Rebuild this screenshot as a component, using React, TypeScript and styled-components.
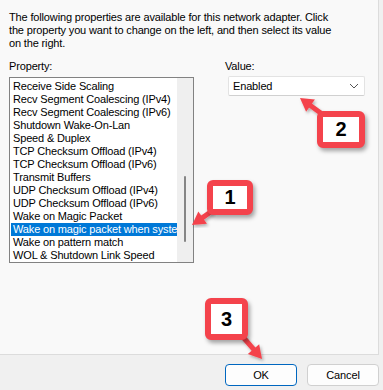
import React from "react";
import styled, { createGlobalStyle } from "styled-components";

const Global = createGlobalStyle`
  html, body { margin: 0; padding: 0; background: #f0f0f0; }
  body { font-family: "Liberation Sans", Arial, sans-serif; }
`;

const RED = "#f4434c";

const Window = styled.div`
  position: relative;
  width: 383px;
  height: 390px;
  background: #f0f0f0;
  overflow: hidden;
  font-family: "Liberation Sans", Arial, sans-serif;
  font-size: 11px;
  letter-spacing: -0.15px;
  color: #000;
`;

const Panel = styled.div`
  box-sizing: border-box;
  width: 379px;
  height: 355px;
  background: #f9f9f9;
  border-right: 1px solid #dcdcdc;
  border-bottom: 1px solid #dcdcdc;
  padding: 11px 0 0 9px;
`;

const Description = styled.p`
  margin: 0;
  width: 336px;
  line-height: 13px;
`;

const Columns = styled.div`
  display: flex;
  margin-top: 10px;
`;

const LeftCol = styled.div`
  display: flex;
  flex-direction: column;
  width: 185px;
`;

const RightCol = styled.div`
  display: flex;
  flex-direction: column;
  margin-left: 31px;
`;

const Label = styled.div`
  height: 17px;
  line-height: 13px;
`;

const ListBox = styled.div`
  display: flex;
  width: 185px;
  height: 186px;
  box-sizing: border-box;
  border: 1px solid #828282;
  background: #fff;
`;

const Items = styled.div`
  flex: 1;
  min-width: 0;
  padding-top: 2px;
  padding-left: 1px;
`;

const Item = styled.div<{ $selected?: boolean }>`
  height: 13px;
  line-height: 13px;
  padding-left: 2px;
  white-space: nowrap;
  overflow: hidden;
  background: ${(p) => (p.$selected ? "#0078d7" : "transparent")};
  color: ${(p) => (p.$selected ? "#fff" : "#000")};
`;

const ScrollBar = styled.div`
  width: 16px;
  background: #efefef;
  display: flex;
  justify-content: center;
  padding-top: 98px;
  box-sizing: border-box;
`;

const Thumb = styled.div`
  width: 2px;
  height: 66px;
  border-radius: 1px;
  background: #858585;
`;

const Select = styled.div`
  width: 137px;
  height: 20px;
  box-sizing: border-box;
  margin-left: 3px;
  margin-top: -1px;
  border: 1px solid #e3e3e3;
  border-bottom-color: #d0d0d0;
  border-radius: 2px;
  background: #fff;
  display: flex;
  align-items: center;
  justify-content: space-between;
  padding: 0 5px 0 4px;
`;

const Footer = styled.div`
  display: flex;
  justify-content: flex-end;
  gap: 10px;
  padding: 9px 4px 0 0;
`;

const Button = styled.button<{ $default?: boolean }>`
  width: 72px;
  height: 22px;
  box-sizing: border-box;
  font-family: inherit;
  font-size: 11px;
  letter-spacing: -0.15px;
  color: #000;
  background: #fdfdfd;
  border: 1px solid ${(p) => (p.$default ? "#0067c0" : "#d0d0d0")};
  border-radius: 4px;
  padding: 0;
`;

const Callout = styled.div<{ $x: number; $y: number; $w: number; $h: number }>`
  position: absolute;
  left: ${(p) => p.$x}px;
  top: ${(p) => p.$y}px;
  width: ${(p) => p.$w}px;
  height: ${(p) => p.$h}px;
  box-sizing: border-box;
  border: 6px solid ${RED};
  border-radius: 6px;
  background: #fff;
  box-shadow: 2px 3px 4px rgba(0, 0, 0, 0.35);
  display: flex;
  align-items: center;
  justify-content: center;
  font-family: "Liberation Sans", Arial, sans-serif;
  font-weight: bold;
  font-size: 20px;
  letter-spacing: 0;
  color: #000;
`;

const Overlay = styled.svg`
  position: absolute;
  left: 0;
  top: 0;
  pointer-events: none;
`;

function arrow(x1: number, y1: number, x2: number, y2: number, head = 13, width = 15) {
  const dx = x2 - x1;
  const dy = y2 - y1;
  const len = Math.hypot(dx, dy);
  const ux = dx / len;
  const uy = dy / len;
  const bx = x2 - ux * head;
  const by = y2 - uy * head;
  const px = -uy * (width / 2);
  const py = ux * (width / 2);
  return {
    line: { x1, y1, x2: bx + ux, y2: by + uy },
    head: `${x2},${y2} ${bx + px},${by + py} ${bx - px},${by - py}`,
  };
}

const arrows = [
  arrow(212, 211, 192, 225),
  arrow(322, 114, 300, 98),
  arrow(243, 337, 262, 359),
];

const items = [
  "Receive Side Scaling",
  "Recv Segment Coalescing (IPv4)",
  "Recv Segment Coalescing (IPv6)",
  "Shutdown Wake-On-Lan",
  "Speed & Duplex",
  "TCP Checksum Offload (IPv4)",
  "TCP Checksum Offload (IPv6)",
  "Transmit Buffers",
  "UDP Checksum Offload (IPv4)",
  "UDP Checksum Offload (IPv6)",
  "Wake on Magic Packet",
  "Wake on magic packet when system is in the S0ix power state",
  "Wake on pattern match",
  "WOL & Shutdown Link Speed",
];

export default function App() {
  return (
    <Window>
      <Global />
      <Panel>
        <Description>
          The following properties are available for this network adapter. Click the property you want to change on the
          left, and then select its value on the right.
        </Description>
        <Columns>
          <LeftCol>
            <Label>Property:</Label>
            <ListBox>
              <Items>
                {items.map((t, i) => (
                  <Item key={t} $selected={i === 11}>
                    {t}
                  </Item>
                ))}
              </Items>
              <ScrollBar>
                <Thumb />
              </ScrollBar>
            </ListBox>
          </LeftCol>
          <RightCol>
            <Label>Value:</Label>
            <Select>
              <span>Enabled</span>
              <svg width="10" height="6" viewBox="0 0 10 6">
                <path d="M1 1 L5 5 L9 1" fill="none" stroke="#555" strokeWidth="1" />
              </svg>
            </Select>
          </RightCol>
        </Columns>
      </Panel>
      <Footer>
        <Button $default>OK</Button>
        <Button>Cancel</Button>
      </Footer>

      <Overlay width="383" height="390">
        <defs>
          <filter id="sh" x="-20%" y="-20%" width="140%" height="140%">
            <feDropShadow dx="1.5" dy="2" stdDeviation="1.5" floodColor="#000" floodOpacity="0.3" />
          </filter>
        </defs>
        {arrows.map((a, i) => (
          <g key={i} filter="url(#sh)">
            <line {...a.line} stroke={RED} strokeWidth={5} />
            <polygon points={a.head} fill={RED} />
          </g>
        ))}
      </Overlay>
      <Callout $x={207} $y={180} $w={46} $h={35}>1</Callout>
      <Callout $x={317} $y={111} $w={48} $h={37}>2</Callout>
      <Callout $x={205} $y={298} $w={43} $h={42}>3</Callout>
    </Window>
  );
}
